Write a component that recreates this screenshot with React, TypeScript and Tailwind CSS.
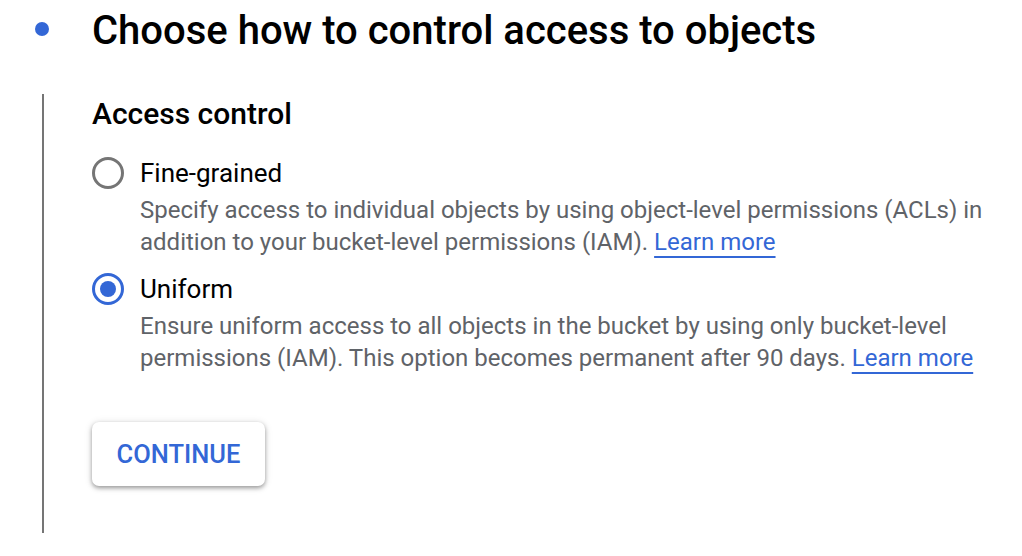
import React from "react";

const options = [
  {
    id: "fine",
    label: "Fine-grained",
    lines: [
      "Specify access to individual objects by using object-level permissions (ACLs) in",
      "addition to your bucket-level permissions (IAM).",
    ],
    checked: false,
  },
  {
    id: "uniform",
    label: "Uniform",
    lines: [
      "Ensure uniform access to all objects in the bucket by using only bucket-level",
      "permissions (IAM). This option becomes permanent after 90 days.",
    ],
    checked: true,
  },
];

function Radio({ checked }: { checked: boolean }) {
  if (checked) {
    return (
      <span className="w-[32px] h-[32px] rounded-full border-[3px] border-[#3367d6] flex items-center justify-center shrink-0">
        <span className="w-[16px] h-[16px] rounded-full bg-[#3367d6]"></span>
      </span>
    );
  }
  return <span className="block w-[32px] h-[32px] rounded-full border-[3px] border-[#757575] shrink-0"></span>;
}

export default function App() {
  return (
    <div className="w-[1022px] h-[556px] bg-white overflow-hidden font-['Roboto',sans-serif] text-[#202124]">
      {/* step header */}
      <div className="flex items-start h-[62px]">
        <div className="w-[92px] pl-[35px] pt-[22px]">
          <span className="block w-[14px] h-[14px] rounded-full bg-[#3367d6]"></span>
        </div>
        <h1 className="text-[40px] font-medium leading-[40px] mt-[11px] text-black">Choose how to control access to objects</h1>
      </div>

      <div className="flex mt-[32px]">
        <div className="w-[92px] pl-[42px]">
          <div className="w-[2px] h-[439px] bg-[#757575]"></div>
        </div>

        <div className="flex flex-col">
          <h2 className="text-[30px] font-medium leading-[40px] text-black">Access control</h2>

          <div className="flex flex-col gap-[13px] mt-[21px]">
            {options.map((o) => (
              <div key={o.id} className="flex gap-[16px]">
                <div className="pt-[2px]">
                  <Radio checked={o.checked} />
                </div>
                <div className="flex flex-col">
                  <div className="text-[26px] leading-[36px] text-black">{o.label}</div>
                  <div className="mt-[3px] text-[24px] leading-[32px] text-[#5f6368]">
                    <div>{o.lines[0]}</div>
                    <div>
                      {o.lines[1]}{" "}
                      <a className="text-[#3367d6] underline decoration-[2px] underline-offset-[6px]">Learn more</a>
                    </div>
                  </div>
                </div>
              </div>
            ))}
          </div>

          <button className="mt-[48px] w-[173px] h-[64px] rounded-[7px] bg-white shadow-[0_2px_4px_rgba(0,0,0,0.35),0_1px_8px_rgba(0,0,0,0.12)] text-[#3367d6] text-[25.5px] font-medium">
            CONTINUE
          </button>
        </div>
      </div>
    </div>
  );
}
